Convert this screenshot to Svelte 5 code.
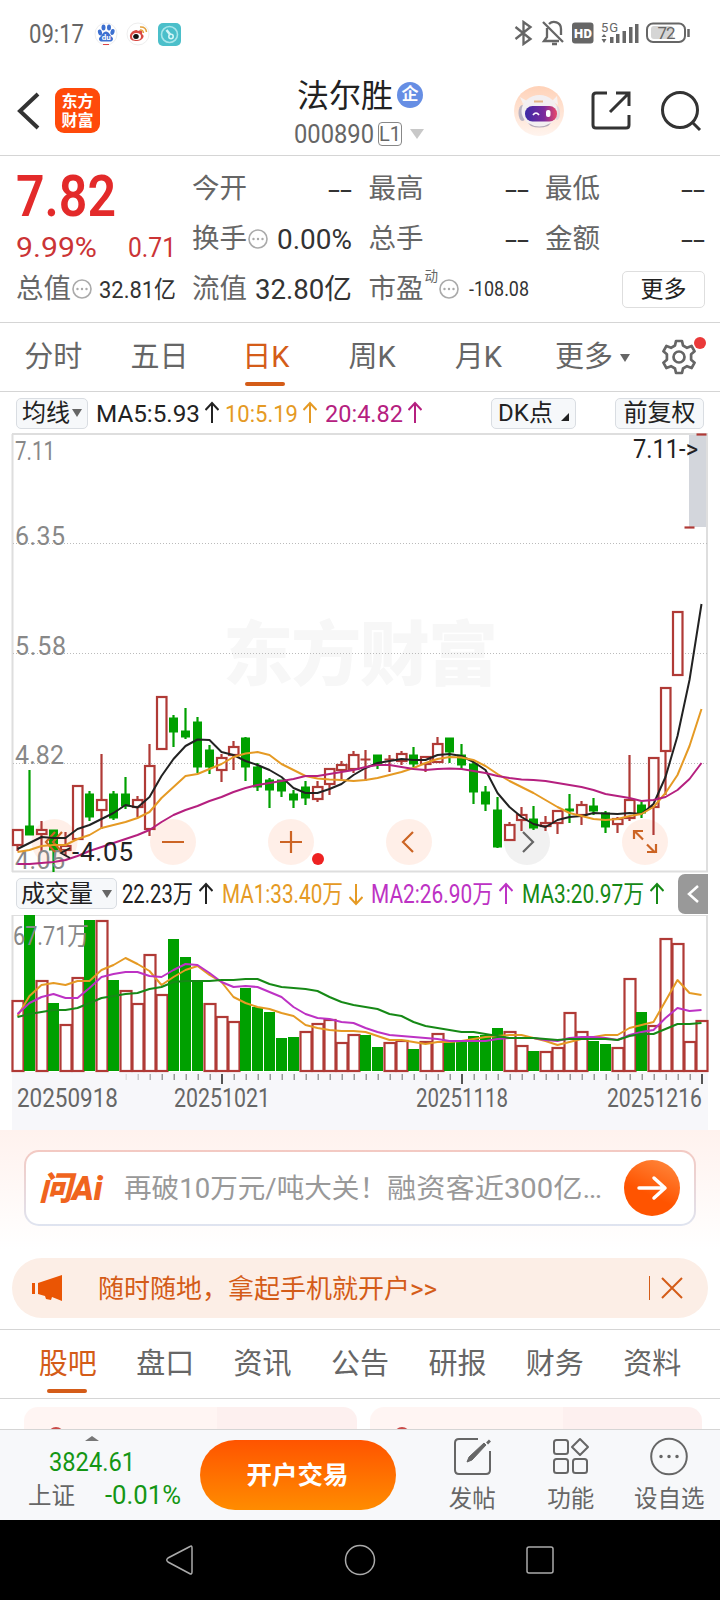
<script lang="ts">
  type Candle = [number, number, number, number, 'u' | 'd'];

  const STEP = 12;
  const x = (i: number) => 17.5 + i * STEP;

  // body top, body bottom, high, low, direction
  const candles: Candle[] = [
    [830, 845, 830, 851, 'u'], [826, 835, 770, 835, 'd'], [830, 834, 821, 851, 'u'], [830, 850, 830, 872, 'd'],
    [846, 850, 832, 856, 'u'], [786, 839, 786, 840, 'u'], [794, 817, 791, 821, 'd'], [800, 810, 754, 829, 'u'],
    [794, 818, 791, 820, 'd'], [794, 806, 777, 809, 'd'], [800, 807, 796, 817, 'u'], [766, 829, 744, 836, 'u'],
    [697, 749, 697, 750, 'u'], [718, 732, 715, 747, 'd'], [731, 737, 708, 739, 'd'], [722, 767, 717, 773, 'd'],
    [750, 767, 745, 774, 'd'], [758, 770, 754, 782, 'u'], [747, 755, 741, 770, 'u'], [738, 767, 737, 781, 'd'],
    [767, 787, 763, 791, 'd'], [780, 790, 778, 808, 'd'], [780, 791, 780, 797, 'd'], [794, 800, 790, 808, 'd'],
    [787, 798, 781, 805, 'd'], [787, 799, 781, 802, 'u'], [769, 784, 769, 795, 'u'], [765, 770, 761, 779, 'u'],
    [755, 769, 751, 773, 'u'], [759, 760, 750, 781, 'u'], [755, 765, 755, 769, 'd'], [759, 760, 755, 772, 'u'],
    [754, 761, 751, 765, 'u'], [755, 764, 747, 767, 'd'], [757, 764, 757, 772, 'u'], [744, 762, 737, 763, 'u'],
    [738, 752, 738, 763, 'd'], [755, 765, 744, 769, 'd'], [764, 792, 761, 804, 'd'], [792, 804, 786, 811, 'd'],
    [810, 847, 797, 848, 'd'], [825, 840, 822, 841, 'u'], [815, 820, 807, 831, 'u'], [819, 828, 806, 830, 'd'],
    [823, 826, 816, 831, 'u'], [811, 823, 811, 834, 'u'], [809, 811, 794, 823, 'd'], [805, 815, 801, 825, 'u'],
    [806, 811, 798, 815, 'd'], [813, 827, 811, 833, 'd'], [819, 824, 817, 833, 'u'], [800, 818, 755, 821, 'u'],
    [805, 813, 802, 818, 'd'], [758, 807, 758, 835, 'u'], [688, 751, 688, 795, 'u'], [612, 675, 612, 675, 'u'],
    [527, 527, 527, 527, 'u'], [434, 434, 434, 434, 'u']
  ];

  const ma5 = [849, 843, 837, 838, 838, 829, 825, 819, 813, 805, 807.5, 797, 776, 759, 746, 739.5, 740, 752, 755, 761, 765, 770, 777, 788, 793, 793, 789, 784, 775, 768, 763, 761, 759, 760, 760, 755, 754, 756, 762, 770, 793, 807, 817, 824, 827, 820, 817, 816, 813, 813.5, 814, 813, 814, 804, 777, 736, 680, 604];
  const ma10 = [852, 850, 846, 845, 845, 839, 835, 828, 825, 822, 818, 812, 798, 787, 776, 774, 769, 764, 757, 753.5, 752, 755, 764, 770, 776, 778.5, 779.5, 780, 781, 780, 778, 775, 772, 768, 763, 759, 757, 757.5, 760, 766, 774, 781, 787, 793, 800, 807, 813, 816, 819, 820, 819, 816, 814, 807, 793, 775, 746, 709];
  const ma20 = [864, 864, 863, 862, 860, 856, 851, 847, 843, 839, 835, 830, 822, 815, 810, 806, 801, 797, 792, 788, 785, 783, 781, 779, 776, 776, 774, 772, 770, 767, 765, 765, 767, 769, 770, 769, 768.5, 769, 771, 773, 776, 778, 779.5, 780, 781, 783, 785, 787, 790, 794, 796, 798, 801, 800, 797, 790, 779, 763];

  const volumes = [1001, 915, 981, 1003, 1025, 978, 920, 921, 980, 991, 1004, 955, 995, 939, 957, 981, 1004, 1017, 1022, 988, 1007, 1012, 1038, 1037, 1032, 1024, 1020, 1043, 1035, 1035, 1047, 1043, 1041, 1049, 1042, 1034, 1042, 1042, 1036, 1035, 1028, 1032, 1046, 1051, 1052, 1048, 1013, 1032, 1041, 1044, 1048, 979, 1012, 1026, 939, 944, 1042, 1021];
  const volumeDown = [1, 3, 6, 8, 13, 14, 15, 19, 20, 21, 22, 23, 29, 30, 33, 36, 37, 38, 39, 40, 43, 48, 49, 52];
  const vma1 = [1016, 996, 985, 983, 985, 981, 981, 970, 965, 958, 964, 971, 985, 977, 970, 966, 975, 982, 997, 1003, 1007, 1009, 1013, 1016, 1025, 1028, 1030, 1031, 1031, 1032, 1036, 1040, 1040, 1042, 1044, 1042, 1042, 1041, 1039, 1037, 1036, 1035, 1035, 1038, 1041, 1045, 1042, 1039, 1037, 1035, 1035, 1028, 1025, 1022, 1001, 980, 993, 995];
  const vma2 = [1014, 1003, 997, 994, 998, 998, 988, 977, 974, 972, 972, 976, 977, 970, 964, 965, 973, 982, 987, 986, 987, 992, 997, 1007, 1014, 1018, 1019, 1022, 1023, 1028, 1032, 1035, 1036, 1037, 1038, 1039, 1041, 1041, 1041, 1041, 1039, 1038, 1038, 1038, 1040, 1041, 1038, 1037, 1037, 1038, 1040, 1035, 1032, 1030, 1018, 1008, 1011, 1010];
  const vma3 = [1017, 1014, 1012, 1010, 1010, 1008, 1003, 998, 996, 994, 993, 989, 987, 982, 981, 981, 981, 980, 980, 979, 979, 984, 987, 988, 989, 991, 997, 1002, 1005, 1007, 1009, 1014, 1016, 1022, 1026, 1028, 1030, 1032, 1032, 1034, 1036, 1038, 1038, 1038, 1039, 1040, 1039, 1039, 1039, 1039, 1040, 1036, 1034, 1034, 1029, 1024, 1024, 1023];

  const line = (values: number[]) => values.map((y, i) => `${x(i)},${y}`).join(' ');

  const periods = ['分时', '五日', '日K', '周K', '月K'];
  const sections = ['股吧', '盘口', '资讯', '公告', '研报', '财务', '资料'];
  const ticks = Array.from({ length: 48 }, (_, i) => i + 10);

  let period = $state('日K');
  let section = $state('股吧');
</script>

<!-- single line of text squeezed or stretched to a fixed width -->
{#snippet fit(text: string, width: number, size: number)}
  <svg class="fit" {width} height={size} font-size={size}>
    <text x="0" y={size * 0.86} textLength={width} lengthAdjust="spacingAndGlyphs">{text}</text>
  </svg>
{/snippet}

{#snippet arrow(down: boolean)}
  <svg class="arrow" width="14" height="24" viewBox="0 0 14 24">
    <path d={down ? 'M7 2V22M.5 15L7 22L13.500 15' : 'M7 22V2M.5 9L7 2L13.500 9'} />
  </svg>
{/snippet}

{#snippet info()}
  <svg class="info" width="20" height="20" viewBox="0 0 20 20">
    <circle cx="10" cy="10" r="9" />
    <path d="M5.500 10h.01M10 10h.01M14.500 10h.01" />
  </svg>
{/snippet}

<div class="phone">
  <div class="status">
    <span class="clock">{@render fit('09:17', 55, 25)}</span>
    <svg class="apps" width="90" height="24" viewBox="0 0 90 24">
      <circle cx="12" cy="12" r="11" fill="#fff" stroke="#eee" />
      <g fill="#3d70d0">
        <ellipse cx="6" cy="10.500" rx="2" ry="3" transform="rotate(-15 6 10.500)" />
        <ellipse cx="9.500" cy="5.500" rx="2" ry="3" />
        <ellipse cx="15" cy="5.500" rx="2" ry="3" />
        <ellipse cx="18.500" cy="10" rx="2" ry="3" transform="rotate(15 18.500 10)" />
        <path d="M12 9.500c3 0 4 4 6.500 6 1.500 2-.5 4.500-3 4h-7c-2.500.5-4.500-2-3-4 2.500-2 3.500-6 6.500-6z" />
      </g>
      <text x="7.700" y="18" font-size="8" font-weight="700" fill="#fff">du</text>
      <path d="M9 22.500h6" stroke="#d44" stroke-width="1" />
      <circle cx="44" cy="12" r="11" fill="#fff" stroke="#eee" />
      <path d="M36 15c-1-4 6-9 8-6 3-2 5 0 4 3 4 2 0 7-5 7-4 0-7-1-7-4z" fill="#d84a43" />
      <ellipse cx="42.500" cy="14.500" rx="4.500" ry="3.500" fill="#fff" />
      <ellipse cx="42" cy="14.500" rx="2.800" ry="2.500" fill="#111" />
      <path d="M46 8q3-.5 3.500 3M46 5q6-.5 6.500 5" fill="none" stroke="#e4a23e" stroke-width="1.500" />
      <rect x="64" y="1" width="23" height="23" rx="5" fill="#4bbfca" />
      <circle cx="75.500" cy="12.500" r="8" fill="none" stroke="#a8e6ea" stroke-width="1.600" />
      <path d="M72.500 8l4 5" stroke="#d3f5f6" stroke-width="2.500" />
      <circle cx="77" cy="14.500" r="2.200" fill="none" stroke="#d3f5f6" stroke-width="1.600" />
    </svg>
    <svg class="signals" width="178" height="26" viewBox="0 0 178 26">
      <g fill="none" stroke="#666" stroke-width="2.300">
        <path d="M1.500 7l15 12-7 5V2l7 5-15 12" />
        <path d="M29 2l20 20M33 8v9l-3 4h15M35 4c4-4 12-2 12 5v6M38 24h5" />
        <rect x="133" y="3.500" width="38" height="18.500" rx="6" stroke-width="2" />
      </g>
      <path d="M174.500 9v8" stroke="#666" stroke-width="2.500" />
      <rect x="137" y="6" width="22" height="13" rx="3" fill="#d5d5d5" />
      <rect x="58" y="2.500" width="21.500" height="21" rx="3" fill="#666" />
      <text x="60" y="17.500" font-size="13" font-weight="900" fill="#fff" textLength="18">HD</text>
      <text x="87" y="11.500" font-size="13" fill="#555" textLength="17">5G</text>
      <text x="143.500" y="18.500" font-size="17" fill="#555" textLength="18">72</text>
      <path d="M87.500 17l2.500-3 2.500 3zM87.500 19l2.500 4 2.500-4zM96 17h3.500v6H96zM102 14h3.500v9H102zM108.500 11h3.500v12h-3.500zM115 7h3.500v16h-3.500zM121 4h3.500v19h-3.500z" fill="#666" />
    </svg>
  </div>

  <header>
    <svg class="back" width="24" height="38" viewBox="0 0 24 38">
      <path d="M21 2L3 19L21 36" fill="none" stroke="#333" stroke-width="4" />
    </svg>
    <div class="logo"><span>东方</span><span>财富</span></div>
    <div class="title">
      <div class="name">法尔胜<span class="corp">企</span></div>
      <div class="code">{@render fit('000890', 80, 25)}<span class="level">L1</span><i></i></div>
    </div>
    <svg class="robot" width="50" height="50" viewBox="0 0 50 50">
      <defs>
        <linearGradient id="peach" x2="0" y2="1"><stop stop-color="#ffd2b8" /><stop offset="1" stop-color="#fff4ee" /></linearGradient>
        <linearGradient id="visor"><stop stop-color="#3b2aa6" /><stop offset=".6" stop-color="#7c2a9c" /><stop offset="1" stop-color="#e8486a" /></linearGradient>
      </defs>
      <circle cx="25" cy="25" r="25" fill="url(#peach)" />
      <path d="M9 18L6 11l7 4zM38 15l5-5 1 9z" fill="#f7f1f0" />
      <ellipse cx="8.500" cy="27" rx="4" ry="8" fill="#b9b3c2" />
      <ellipse cx="43" cy="27" rx="3" ry="7" fill="#e2d9dc" />
      <ellipse cx="25.500" cy="25" rx="18" ry="16" fill="#f3eff1" />
      <path d="M14 37q11 7 23 0l-3 3q-9 3-17 0z" fill="#b4a9b8" />
      <path d="M20 15.500h9" stroke="#e5b487" stroke-width="2" />
      <rect x="11" y="20" width="32" height="15.500" rx="7.500" fill="url(#visor)" />
      <path d="M19 29q3-4 6 0" fill="none" stroke="#fff" stroke-width="1.700" />
      <rect x="32" y="24" width="4.500" height="7" rx="2" fill="#fff" />
    </svg>
    <svg class="share" width="40" height="40" viewBox="0 0 40 40">
      <path d="M16 2H5Q2 2 2 5V34Q2 37 5 37H35Q38 37 38 34V24M38 15V2H25M38 2L19 21" />
    </svg>
    <svg class="search" width="42" height="42" viewBox="0 0 42 42">
      <circle cx="20" cy="20" r="17.500" /><path d="M32 32l8 8" />
    </svg>
  </header>

  <section class="quote">
    <div class="last">
      <div class="price">{@render fit('7.82', 100, 57)}</div>
      <div class="change"><span>{@render fit('9.99%', 81, 28)}</span><span>{@render fit('0.71', 48, 28)}</span></div>
      <div class="cell">总值{@render info()}<b>{@render fit('32.81亿', 77, 24)}</b></div>
    </div>
    <div class="grid">
      <div class="cell">今开<b>{@render fit('--', 24, 28)}</b></div>
      <div class="cell">最高<b>{@render fit('--', 24, 28)}</b></div>
      <div class="cell">最低<b>{@render fit('--', 24, 28)}</b></div>
      <div class="cell">换手{@render info()}<b>{@render fit('0.00%', 75, 27)}</b></div>
      <div class="cell">总手<b>{@render fit('--', 24, 28)}</b></div>
      <div class="cell">金额<b>{@render fit('--', 24, 28)}</b></div>
      <div class="cell">流值<b>{@render fit('32.80亿', 97, 28)}</b></div>
      <div class="cell">市盈<sup>动</sup>{@render info()}<b>{@render fit('-108.08', 60, 20)}</b></div>
      <div class="cell"><button class="more">更多</button></div>
    </div>
  </section>

  <nav class="periods">
    {#each periods as name}
      <button class:active={period === name} onclick={() => (period = name)}>{name}</button>
    {/each}
    <button class="wide">更多<i></i></button>
    <div class="settings">
      <svg width="34" height="36" viewBox="0 0 34 36">
        <path d="M14 2h6l1 4.500 4 2.300 4.600-1.800 3 5.300-3.500 3v5.400l3.500 3-3 5.300-4.600-1.800-4 2.300-1 4.500h-6l-1-4.500-4-2.300-4.600 1.800-3-5.300 3.500-3v-5.400l-3.500-3 3-5.300 4.600 1.800 4-2.300z" />
        <circle cx="17" cy="18" r="5.500" />
      </svg>
      <em></em>
    </div>
  </nav>

  <div class="readout">
    <button class="chip ma">均线<i></i></button>
    <span class="black">{@render fit('MA5:5.93', 104, 24)}{@render arrow(false)}</span>
    <span class="orange">{@render fit('10:5.19', 73, 24)}{@render arrow(false)}</span>
    <span class="magenta">{@render fit('20:4.82', 78, 24)}{@render arrow(false)}</span>
    <button class="chip dk">DK点<s></s></button>
    <button class="chip adj">前复权</button>
  </div>

  <svg class="kline" width="720" height="438" viewBox="0 434 720 438">
    <text class="watermark" x="223" y="680" textLength="275">东方财富</text>
    <rect x="689" y="434" width="18" height="93" fill="#d3d6dc" />
    <path class="frame" d="M12.500 434V872M707 434V872M12 434H708M12 871.500H708" />
    <path class="dots" d="M13 543.500H707M13 653.500H707M13 763.500H707" />
    <g class="round">
      <circle cx="54.500" cy="842" r="23" /><circle cx="173" cy="842" r="23" /><circle cx="291" cy="842" r="23" />
      <circle cx="409" cy="842" r="23" /><circle class="muted" cx="527" cy="842" r="23" /><circle cx="645" cy="842" r="23" />
    </g>
    {#each candles as [top, bottom, high, low, dir], i}
      {#if dir === 'd'}
        <path class="down" d="M{x(i)} {high}V{low}" />
        <rect class="down" x={x(i) - 4} y={top} width="8" height={bottom - top} />
      {:else if bottom - top < 2}
        <path class="up" d="M{x(i)} {high}V{top}V{low}M{x(i) - 5} {top + 0.5}h10" />
      {:else}
        <path class="up" d="M{x(i)} {high}V{top}M{x(i)} {bottom}V{low}" />
        <rect class="up" x={x(i) - 4.5} y={top} width="9.500" height={bottom - top} />
      {/if}
    {/each}
    <g font-size="25" class="scale">
      <text x="15" y="460" textLength="40" lengthAdjust="spacingAndGlyphs">7.11</text>
      <text x="15" y="545" textLength="50">6.35</text>
      <text x="15" y="655" textLength="51">5.58</text>
      <text x="15" y="764" textLength="49">4.82</text>
      <text x="15" y="869" textLength="50">4.05</text>
    </g>
    <g class="tools">
      <path d="M55 832l-9 10 9 10M62 832l-9 10 9 10M162 842h22M280 842h22M291 831v22M413 832l-10 10 10 10" />
      <path d="M643 839.500l-8-8M634 839v-8h9M647 844.500l8 8M656 844v8h-9" />
      <path class="muted" d="M523 832l10 10-10 10" />
    </g>
    <polyline stroke="#222" points={line(ma5)} />
    <polyline stroke="#e59a24" points={line(ma10)} />
    <polyline stroke="#b5207f" points={line(ma20)} />
    <path d="M70 848l-9 5 9 5" fill="none" stroke="#222" stroke-width="1.800" />
    <text class="dark" x="72" y="861" font-size="26" textLength="61">-4.05</text>
    <text class="dark" x="633" y="458" font-size="26" textLength="65" lengthAdjust="spacingAndGlyphs">7.11-&gt;</text>
    <circle cx="318" cy="859" r="6" fill="#e22" />
  </svg>

  <div class="readout volume">
    <button class="chip vol">成交量<i></i></button>
    <span class="black">{@render fit('22.23万', 71, 25)}{@render arrow(false)}</span>
    <span class="orange">{@render fit('MA1:33.40万', 121, 25)}{@render arrow(true)}</span>
    <span class="purple">{@render fit('MA2:26.90万', 122, 25)}{@render arrow(false)}</span>
    <span class="green">{@render fit('MA3:20.97万', 122, 25)}{@render arrow(false)}</span>
    <button class="fold" aria-label="展开">
      <svg width="12" height="18" viewBox="0 0 12 18"><path d="M11 1L2 9l9 8" /></svg>
    </button>
  </div>

  <svg class="bars" width="720" height="215" viewBox="0 915 720 215">
    <rect x="12" y="1072" width="696" height="58" fill="#f7f7fa" />
    <path class="frame" d="M12.500 915V1071M707 915V1071M12 915H708" />
    {#each volumes as top, i}
      {#if volumeDown.includes(i)}
        <rect x={12 + i * STEP} y={top} width="11" height={1071 - top} fill="#00a000" />
      {:else}
        <rect class="up" x={12.5 + i * STEP} y={top} width="11" height={1071 - top} />
      {/if}
    {/each}
    <text class="scale" x="13" y="945" font-size="25" textLength="76" lengthAdjust="spacingAndGlyphs">67.71万</text>
    <polyline stroke="#e59a24" points={line(vma1)} />
    <polyline stroke="#bd32c4" points={line(vma2)} />
    <polyline stroke="#168916" points={line(vma3)} />
    {#each ticks as i}
      <rect x={5.5 + i * STEP} y="1074" width="1.500" height="6" fill="#999" opacity={Math.min(1, (i - 9) / 4)} />
    {/each}
    <path d="M222 1074v10M462 1074v10M702 1074v10" stroke="#555" stroke-width="2" />
    <g font-size="25">
      <text x="17" y="1107" textLength="101" lengthAdjust="spacingAndGlyphs">20250918</text>
      <text x="174" y="1107" textLength="96" lengthAdjust="spacingAndGlyphs">20251021</text>
      <text x="416" y="1107" textLength="92" lengthAdjust="spacingAndGlyphs">20251118</text>
      <text x="607" y="1107" textLength="95" lengthAdjust="spacingAndGlyphs">20251216</text>
    </g>
  </svg>

  <section class="ai">
    <div class="ask">
      <span class="brand">问Ai</span>
      {@render fit('再破10万元/吨大关！', 263, 27)}
      {@render fit('融资客近300亿…', 215, 27)}
      <svg class="go" width="56" height="56" viewBox="0 0 56 56">
        <path d="M15 28h25M30 18l11 10-11 10" />
      </svg>
    </div>
  </section>

  <div class="banner">
    <svg width="32" height="28" viewBox="0 0 32 28">
      <path d="M0 9h3v11H0zM6 9L30 1v26l-10-4-1 3-5-1-1-3-7-2z" />
    </svg>
    <span>随时随地，拿起手机就开户&gt;&gt;</span>
    <i></i>
    <svg class="close" width="22" height="22" viewBox="0 0 22 22"><path d="M1 1l20 20M21 1L1 21" /></svg>
  </div>

  <nav class="sections">
    {#each sections as name}
      <button class:active={section === name} onclick={() => (section = name)}>{name}</button>
    {/each}
  </nav>

  <div class="cards">
    <div class="card"><i></i></div>
    <div class="card"><i></i></div>
  </div>

  <footer>
    <div class="index">
      <i></i>
      <div class="points">{@render fit('3824.61', 86, 26)}</div>
      <div class="row"><span>上证</span>{@render fit('-0.01%', 76, 25)}</div>
    </div>
    <button class="trade">开户交易</button>
    <div class="action">
      <svg width="38" height="40" viewBox="0 0 38 40">
        <path d="M25 2H6Q2 2 2 6V33Q2 37 6 37H33Q37 37 37 33V14" />
        <path d="M34.500 4l2 2" stroke-width="4" />
        <path d="M14 25l2-5L31 6l2 2-14 15z" fill="#666" stroke-width="1" />
      </svg>
      发帖
    </div>
    <div class="action">
      <svg width="38" height="40" viewBox="0 0 38 40">
        <rect x="2" y="3" width="14" height="14" rx="2.500" /><rect x="2" y="22" width="14" height="14" rx="2.500" />
        <rect x="21" y="22" width="14" height="14" rx="2.500" /><path d="M28 2l8 8-8 8-8-8z" stroke-linejoin="round" />
      </svg>
      功能
    </div>
    <div class="action">
      <svg width="38" height="40" viewBox="0 0 38 40">
        <circle cx="19" cy="19.500" r="17.800" />
        <path d="M11 19.500h.01M19 19.500h.01M27 19.500h.01" stroke-width="3.500" stroke-linecap="round" />
      </svg>
      设自选
    </div>
  </footer>

  <div class="system">
    <svg width="720" height="80" viewBox="0 0 720 80">
      <path d="M190 26.500Q192 25 192 28V52Q192 55 189.500 53.500L168 42Q165.500 40 168 38z" />
      <circle cx="360" cy="40" r="14.500" />
      <rect x="527" y="27" width="26" height="26" rx="2" />
    </svg>
  </div>
</div>

<style>
  :global(body) {
    background: #fff;
  }
  .phone {
    width: 720px;
    height: 1600px;
    display: flex;
    flex-direction: column;
    overflow: hidden;
    font-family: Roboto, "Noto Sans CJK SC", sans-serif;
    color: #666;
    background: #fff;
  }
  .phone > :global(*) {
    flex: none;
    box-sizing: border-box;
  }
  button {
    font: inherit;
    color: inherit;
    border: 0;
    padding: 0;
    background: none;
    white-space: nowrap;
  }
  svg {
    display: block;
    flex: none;
  }
  svg text {
    fill: currentColor;
  }
  .fit,
  .kline {
    overflow: visible;
  }
  .arrow path {
    fill: none;
    stroke: currentColor;
    stroke-width: 2;
  }
  polyline {
    fill: none;
    stroke-width: 2;
    stroke-linejoin: round;
  }

  .status {
    height: 68px;
    display: flex;
    align-items: center;
    padding: 0 28px;
  }
  .clock {
    margin: -1px 0 0 1px;
  }
  .status svg text[fill="#fff"] {
    fill: #fff;
  }
  .apps {
    margin-left: 10px;
  }
  .signals {
    margin-left: auto;
    margin-top: -2px;
  }

  header {
    height: 88px;
    display: flex;
    align-items: center;
    padding: 0 18px 0 17px;
    border-bottom: 1px solid #d5d5d5;
  }
  .back {
    margin-top: -2px;
  }
  .logo {
    width: 45px;
    height: 45px;
    margin: -2px 0 0 14px;
    display: flex;
    flex-direction: column;
    align-items: center;
    justify-content: center;
    border-radius: 9px;
    background: #ff4a0a;
    color: #fff;
    font-size: 16px;
    font-weight: 700;
    line-height: 19px;
  }
  .title {
    width: 150px;
    margin: 4px 0 0 182px;
  }
  .name {
    display: flex;
    align-items: center;
    margin: 0 0 0 15px;
    font-size: 32px;
    line-height: 40px;
    color: #222;
    white-space: nowrap;
  }
  .corp {
    width: 26px;
    height: 26px;
    margin: -2px 0 0 4px;
    border-radius: 50%;
    background: #668ee4;
    color: #fff;
    font-size: 17px;
    font-weight: 700;
    line-height: 25px;
    text-align: center;
  }
  .code {
    display: flex;
    align-items: center;
    height: 36px;
    padding-left: 12px;
  }
  .level {
    width: 22px;
    height: 22px;
    margin-left: 4px;
    border: 1.5px solid #888;
    border-radius: 4px;
    font-size: 20px;
    line-height: 23px;
    text-align: center;
  }
  .code i {
    margin-left: 8px;
    border: 7.5px solid transparent;
    border-top: 10px solid #c8c8c8;
    border-bottom: 0;
  }
  .robot {
    margin: -2px 0 0 82px;
  }
  .share,
  .search {
    fill: none;
    stroke: #333;
    stroke-width: 3;
  }
  .share {
    margin: -2px 0 0 27px;
  }
  .search {
    margin: -2px 0 0 29px;
  }

  .quote {
    display: flex;
    height: 167px;
    padding: 7px 15px 0 16px;
    border-bottom: 1px solid #d5d5d5;
  }
  .last {
    width: 160px;
    margin-right: 16px;
  }
  .price {
    height: 65px;
    padding-top: 4px;
    color: #e32a2a;
    font-weight: 600;
    box-sizing: border-box;
  }
  .change {
    display: flex;
    justify-content: space-between;
    height: 35px;
    padding-top: 5px;
    box-sizing: border-box;
    color: #cb3436;
  }
  .grid {
    flex: 1;
    display: grid;
    grid-template-columns: repeat(3, 160px);
    justify-content: space-between;
    grid-auto-rows: 50px;
  }
  .cell {
    display: flex;
    align-items: center;
    height: 50px;
    font-size: 27.5px;
    line-height: 36px;
    padding-top: 2px;
    box-sizing: border-box;
    white-space: nowrap;
  }
  .cell b {
    margin-left: auto;
    font-weight: 400;
    color: #333;
  }
  .info {
    margin: 0 0 0 1px;
    fill: none;
    stroke: #aaa;
    stroke-width: 1.6;
  }
  .info path {
    stroke-width: 2.4;
    stroke-linecap: round;
  }
  sup {
    align-self: flex-start;
    font-size: 13.5px;
    line-height: 23px;
    margin: 0 0 0 1px;
  }
  .more {
    width: 83px;
    height: 37px;
    margin: 1px 0 0 auto;
    border: 1.5px solid #dedede;
    border-radius: 5px;
    font-size: 23px;
    line-height: 33px;
    color: #222;
  }

  .periods {
    display: flex;
    height: 69px;
    border-bottom: 1px solid #d5d5d5;
    font-size: 29px;
  }
  .periods button {
    position: relative;
    width: 106.3px;
    padding-bottom: 6px;
  }
  .periods .wide {
    width: 122px;
  }
  .wide i {
    display: inline-block;
    margin: 0 0 5px 7px;
    border: 5px solid transparent;
    border-top: 8px solid #666;
    border-bottom: 0;
  }
  .active,
  .periods .active {
    color: #d45c18;
  }
  .active::after {
    content: "";
    position: absolute;
    left: 50%;
    bottom: 5px;
    width: 40px;
    height: 4px;
    margin-left: -21px;
    border-radius: 2px;
    background: currentColor;
  }
  .settings {
    position: relative;
    margin: 16px 0 0 9px;
    height: 36px;
  }
  .settings svg {
    fill: none;
    stroke: #666;
    stroke-width: 2.7;
    stroke-linejoin: round;
  }
  .settings em {
    position: absolute;
    left: 32px;
    top: -2px;
    width: 12px;
    height: 12px;
    border-radius: 50%;
    background: #ea3939;
  }

  .readout {
    display: flex;
    align-items: center;
    height: 42px;
    padding: 0 16px;
  }
  .readout span {
    display: flex;
    align-items: center;
    gap: 5px;
  }
  .chip {
    box-sizing: border-box;
    height: 31px;
    border: 1px solid #d9dde2;
    border-radius: 5px;
    background: #f6f8fa;
    color: #222;
    font-size: 24px;
    line-height: 28px;
  }
  .chip i {
    display: inline-block;
    margin: 0 0 4px 2px;
    border: 5px solid transparent;
    border-top: 8px solid #666;
    border-bottom: 0;
  }
  .chip s {
    display: inline-block;
    margin-left: 8px;
    border: 4px solid #222;
    border-top-color: transparent;
    border-left-color: transparent;
  }
  .ma {
    width: 72px;
    margin-right: 8px;
  }
  .dk {
    width: 85px;
    margin-left: auto;
  }
  .adj {
    width: 89px;
    margin-left: 39px;
  }
  .black {
    color: #222;
  }
  .orange {
    color: #e59a24;
    margin-left: 6px;
  }
  .magenta {
    color: #b5207f;
    margin-left: 8px;
  }
  .purple {
    color: #bd32c4;
  }
  .green {
    color: #168916;
  }

  .frame {
    stroke: #dedede;
    stroke-width: 2;
  }
  .dots {
    stroke: #bbb;
    stroke-dasharray: 1 2;
  }
  .kline .watermark {
    fill: #f7f7f7;
    font-size: 70px;
    font-weight: 900;
  }
  .scale text,
  text.scale {
    fill: #888;
  }
  .kline .dark {
    fill: #222;
  }
  .up {
    fill: #fff;
    stroke: #b03a36;
    stroke-width: 2.2;
  }
  .down {
    fill: #00a000;
    stroke: #00a000;
    stroke-width: 2.2;
  }
  rect.down {
    stroke-width: 1;
  }
  .round circle {
    fill: #ffe4d8;
    opacity: 0.6;
  }
  .round .muted {
    fill: #e8e8e8;
  }
  .tools {
    fill: none;
    stroke: #cc6424;
    stroke-width: 2.2;
  }
  .tools .muted {
    stroke: #666;
  }

  .volume {
    height: 43px;
    padding: 0 12px 0 16px;
  }
  .vol {
    width: 101px;
    margin-right: 5px;
  }
  .vol i {
    margin-left: 9px;
  }
  .volume span {
    gap: 6px;
  }
  .volume .orange {
    margin-left: 9px;
  }
  .volume .purple {
    margin-left: 8px;
  }
  .volume .green {
    margin-left: 9px;
  }
  .fold {
    display: flex;
    align-items: center;
    justify-content: center;
    width: 30px;
    height: 40px;
    margin-left: auto;
    border-radius: 7px 0 0 7px;
    background: #999;
  }
  .fold path {
    fill: none;
    stroke: #fff;
    stroke-width: 2.5;
  }

  .ai {
    height: 120px;
    padding: 20px 24px 0;
    background: linear-gradient(#fff2ee, #fff);
  }
  .ask {
    display: flex;
    align-items: center;
    box-sizing: border-box;
    height: 76px;
    padding: 0 14px 0 13px;
    border: 2px solid transparent;
    border-radius: 15px;
    background: linear-gradient(#fff, #fff) padding-box, linear-gradient(#f3c9c2, #dfe4f0) border-box;
    color: #999;
  }
  .brand {
    width: 85px;
    margin-top: -4px;
    font-size: 33px;
    font-weight: 900;
    font-style: italic;
    color: #f0641e;
  }
  .go {
    margin-left: auto;
    border-radius: 50%;
    background: linear-gradient(25deg, #ff5400 40%, #ff8c42);
    fill: none;
    stroke: #fff;
    stroke-width: 3.5;
    stroke-linecap: round;
    stroke-linejoin: round;
  }

  .banner {
    display: flex;
    align-items: center;
    height: 60px;
    margin: 8px 12px 11px;
    padding: 0 25px 0 20px;
    border-radius: 30px;
    background: #fceee6;
    color: #d45c18;
    font-size: 26px;
  }
  .banner svg {
    fill: #ea5504;
  }
  .banner span {
    margin: -4px 0 0 34px;
  }
  .banner i {
    width: 1.5px;
    height: 24px;
    margin: 0 11px 0 auto;
    background: #d45c18;
  }
  .banner .close {
    stroke: #d45c18;
    stroke-width: 2;
  }

  .sections {
    display: flex;
    height: 70px;
    padding: 0 19px;
    border-top: 1px solid #d5d5d5;
    border-bottom: 1px solid #d5d5d5;
    font-size: 29px;
  }
  .sections button {
    position: relative;
    flex: 1;
    padding-bottom: 6px;
  }

  .cards {
    display: flex;
    gap: 13px;
    height: 30px;
    padding: 8px 18px 0 24px;
    overflow: hidden;
  }
  .card {
    flex: 1;
    height: 60px;
    border-radius: 14px;
    background: linear-gradient(90deg, #fff5f3 58%, #fdf0ef 58%);
  }
  .card i {
    display: block;
    width: 16px;
    height: 16px;
    margin: 20px 0 0 24px;
    border-radius: 50%;
    background: #c94a48;
  }

  footer {
    display: flex;
    height: 91px;
    border-top: 1px solid #d5d5d5;
    background: #f7f8fa;
    font-size: 23.5px;
  }
  .index {
    width: 200px;
  }
  .index i {
    display: block;
    width: 0;
    margin: 6px 0 0 85px;
    border: 7px solid transparent;
    border-bottom: 5px solid #777;
    border-top: 0;
  }
  .points,
  .row {
    color: #149614;
  }
  .points {
    margin: 8px 0 0 49px;
  }
  .row {
    display: flex;
    align-items: center;
    height: 38px;
    padding-left: 28px;
  }
  .row span {
    width: 77px;
    color: #666;
  }
  .trade {
    width: 196px;
    height: 70px;
    margin: 10px 27px 0 0;
    padding: 0 1px 5px 0;
    border-radius: 35px;
    background: linear-gradient(#ff5400, #ff8c00);
    color: #fff;
    font-size: 25.5px;
    font-weight: 700;
  }
  .action {
    display: flex;
    flex-direction: column;
    align-items: center;
    width: 98.5px;
    padding-top: 7px;
    line-height: 44px;
  }
  .action svg {
    fill: none;
    stroke: #666;
    stroke-width: 2;
  }

  .system {
    height: 80px;
    background: #000;
  }
  .system svg {
    fill: none;
    stroke: #aaa;
    stroke-width: 1.5;
  }
</style>
